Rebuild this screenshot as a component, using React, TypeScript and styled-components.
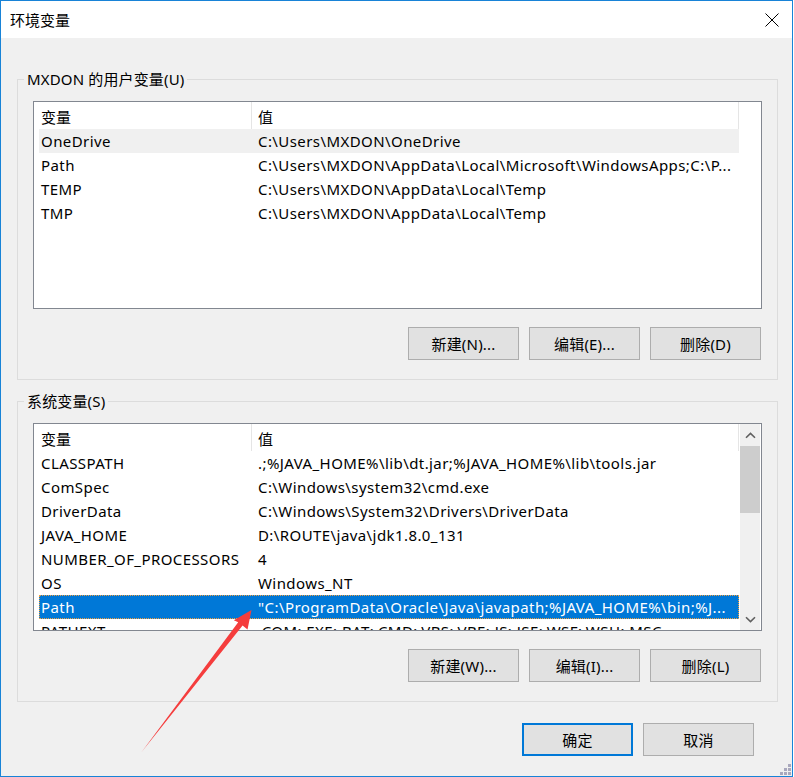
import React from "react";
import styled, { createGlobalStyle, css } from "styled-components";

const GlobalStyle = createGlobalStyle`
  html, body { margin: 0; padding: 0; background: #ffffff; }
  body {
    font-family: "Noto Sans", "Noto Sans CJK SC", sans-serif;
    font-size: 15px;
    color: #000;
  }
  * { box-sizing: border-box; }
`;

const Window = styled.div`
  position: relative;
  width: 793px;
  height: 777px;
  border: 1px solid #1883d7;
  display: flex;
  flex-direction: column;
  background: #f0f0f0;
`;

const TitleBar = styled.div`
  height: 37px;
  flex: none;
  background: #ffffff;
  display: flex;
  align-items: center;
  justify-content: space-between;
  padding: 0 13px 0 9px;
`;

const Title = styled.span`
  font-family: "Noto Sans CJK SC", sans-serif;
  font-size: 15px;
  line-height: 20px;
`;

const CloseIcon = styled.svg`
  width: 14px;
  height: 14px;
  display: block;
`;

const Body = styled.div`
  flex: 1;
  display: flex;
  flex-direction: column;
  padding: 31px 14px 0 16px;
`;

const Group = styled.fieldset<{ $gap?: number }>`
  margin: ${(p) => p.$gap ?? 0}px 0 0 0;
  padding: 0;
  border: 1px solid #dcdcdc;
  min-width: 0;
`;

const Legend = styled.legend`
  margin-left: 6px;
  padding: 0 3px;
  line-height: 20px;
  font-size: 15px;
  letter-spacing: 0.15px;
  font-family: "Noto Sans", "Noto Sans CJK SC", sans-serif;
`;

const GroupBody = styled.div`
  padding: 12px 15px 19px 15px;
  display: flex;
  flex-direction: column;
`;

const ListBox = styled.div`
  height: 208px;
  border: 1px solid #828790;
  background: #ffffff;
  display: flex;
  overflow: hidden;
`;

const ListMain = styled.div`
  width: 700px;
  flex: none;
  margin-left: 5px;
  overflow: hidden;
`;

const HeaderRow = styled.div`
  display: grid;
  grid-template-columns: 213px 487px;
  height: 27px;
`;

const HeaderCell = styled.div<{ $first?: boolean }>`
  border-right: 1px solid #e5e5e5;
  padding: 3px 0 0 ${(p) => (p.$first ? 2 : 6)}px;
  line-height: 24px;
  font-family: "Noto Sans CJK SC", sans-serif;
`;

type RowState = "none" | "inactive" | "active";

const Row = styled.div<{ $state: RowState }>`
  display: grid;
  grid-template-columns: 213px 487px;
  height: 24px;
  line-height: 24px;
  white-space: nowrap;
  ${(p) =>
    p.$state === "inactive" &&
    css`
      background: #f0f0f0;
    `}
  ${(p) =>
    p.$state === "active" &&
    css`
      background: #0078d7;
      color: #ffffff;
      outline: 1px dotted #f0a040;
      outline-offset: -1px;
    `}
`;

const Cell = styled.div<{ $first?: boolean }>`
  padding-left: ${(p) => (p.$first ? 2 : 6)}px;
  overflow: hidden;
  white-space: nowrap;
  letter-spacing: 0.42px;
`;

const ScrollBar = styled.div`
  width: 20px;
  flex: none;
  margin-left: 1px;
  background: #f0f0f0;
  display: flex;
  flex-direction: column;
`;

const ScrollArrow = styled.div`
  height: 22px;
  flex: none;
  display: flex;
  align-items: center;
  justify-content: center;
`;

const ScrollThumb = styled.div`
  height: 67px;
  flex: none;
  background: #cdcdcd;
`;

const ScrollTrack = styled.div`
  flex: 1;
`;

const ButtonRow = styled.div<{ $top: number; $right?: number }>`
  display: flex;
  justify-content: flex-end;
  gap: 10px;
  margin-top: ${(p) => p.$top}px;
  margin-right: ${(p) => p.$right ?? 0}px;
`;

const Button = styled.button<{ $primary?: boolean }>`
  width: 111px;
  height: 33px;
  padding: 0;
  margin: 0;
  background: #e1e1e1;
  border: ${(p) => (p.$primary ? "2px solid #0078d7" : "1px solid #adadad")};
  font-family: "Noto Sans", "Noto Sans CJK SC", sans-serif;
  font-size: 15px;
  letter-spacing: 0.2px;
  color: #000;
  line-height: 20px;
`;

const Overlay = styled.svg`
  position: absolute;
  left: -1px;
  top: -1px;
  width: 794px;
  height: 777px;
  pointer-events: none;
`;

const Grip = styled.svg`
  position: absolute;
  right: 1px;
  bottom: 1px;
  width: 11px;
  height: 11px;
`;

type Item = { name: string; value: string; state?: RowState };

const userVars: Item[] = [
  { name: "OneDrive", value: "C:\\Users\\MXDON\\OneDrive", state: "inactive" },
  { name: "Path", value: "C:\\Users\\MXDON\\AppData\\Local\\Microsoft\\WindowsApps;C:\\P..." },
  { name: "TEMP", value: "C:\\Users\\MXDON\\AppData\\Local\\Temp" },
  { name: "TMP", value: "C:\\Users\\MXDON\\AppData\\Local\\Temp" },
];

const sysVars: Item[] = [
  { name: "CLASSPATH", value: ".;%JAVA_HOME%\\lib\\dt.jar;%JAVA_HOME%\\lib\\tools.jar" },
  { name: "ComSpec", value: "C:\\Windows\\system32\\cmd.exe" },
  { name: "DriverData", value: "C:\\Windows\\System32\\Drivers\\DriverData" },
  { name: "JAVA_HOME", value: "D:\\ROUTE\\java\\jdk1.8.0_131" },
  { name: "NUMBER_OF_PROCESSORS", value: "4" },
  { name: "OS", value: "Windows_NT" },
  { name: "Path", value: "\"C:\\ProgramData\\Oracle\\Java\\javapath;%JAVA_HOME%\\bin;%J...", state: "active" },
  { name: "PATHEXT", value: ".COM;.EXE;.BAT;.CMD;.VBS;.VBE;.JS;.JSE;.WSF;.WSH;.MSC" },
];

const Chevron: React.FC<{ down?: boolean }> = ({ down }) => (
  <svg width="11" height="7" viewBox="0 0 11 7">
    <polyline
      points={down ? "1,1.2 5.5,5.6 10,1.2" : "1,5.8 5.5,1.4 10,5.8"}
      fill="none"
      stroke="#606060"
      strokeWidth="1.6"
    />
  </svg>
);

const VarList: React.FC<{ items: Item[]; scroll?: boolean }> = ({ items, scroll }) => (
  <ListBox>
    <ListMain>
      <HeaderRow>
        <HeaderCell $first>变量</HeaderCell>
        <HeaderCell>值</HeaderCell>
      </HeaderRow>
      {items.map((it, i) => (
        <Row key={i} $state={it.state ?? "none"}>
          <Cell $first>{it.name}</Cell>
          <Cell>{it.value}</Cell>
        </Row>
      ))}
    </ListMain>
    {scroll && (
      <ScrollBar>
        <ScrollArrow>
          <Chevron />
        </ScrollArrow>
        <ScrollThumb />
        <ScrollTrack />
        <ScrollArrow>
          <Chevron down />
        </ScrollArrow>
      </ScrollBar>
    )}
  </ListBox>
);

export default function App() {
  return (
    <>
      <GlobalStyle />
      <Window>
        <TitleBar>
          <Title>环境变量</Title>
          <CloseIcon viewBox="0 0 14 14">
            <path d="M0.5 0.5 L13.5 13.5 M13.5 0.5 L0.5 13.5" stroke="#000" strokeWidth="1" fill="none" />
          </CloseIcon>
        </TitleBar>
        <Body>
          <Group>
            <Legend>MXDON 的用户变量(U)</Legend>
            <GroupBody>
              <VarList items={userVars} />
              <ButtonRow $top={18} $right={1}>
                <Button>新建(N)...</Button>
                <Button>编辑(E)...</Button>
                <Button>删除(D)</Button>
              </ButtonRow>
            </GroupBody>
          </Group>
          <Group $gap={11}>
            <Legend>系统变量(S)</Legend>
            <GroupBody>
              <VarList items={sysVars} scroll />
              <ButtonRow $top={18} $right={1}>
                <Button>新建(W)...</Button>
                <Button>编辑(I)...</Button>
                <Button>删除(L)</Button>
              </ButtonRow>
            </GroupBody>
          </Group>
          <ButtonRow $top={21} $right={24}>
            <Button $primary>确定</Button>
            <Button>取消</Button>
          </ButtonRow>
        </Body>
        <Grip viewBox="0 0 11 11">
          <rect x="8" y="0" width="3" height="3" fill="#a9a8bd" />
          <rect x="4" y="4" width="3" height="3" fill="#a9a8bd" />
          <rect x="8" y="4" width="3" height="3" fill="#a9a8bd" />
          <rect x="0" y="8" width="3" height="3" fill="#a9a8bd" />
          <rect x="4" y="8" width="3" height="3" fill="#a9a8bd" />
          <rect x="8" y="8" width="3" height="3" fill="#a9a8bd" />
        </Grip>
        <Overlay viewBox="0 0 794 777">
          <polygon
            points="251.5,610 247.5,629.5 242.6,625.6 141.6,752 238.2,622.2 233.8,620.2"
            fill="#f53d3d"
          />
        </Overlay>
      </Window>
    </>
  );
}
